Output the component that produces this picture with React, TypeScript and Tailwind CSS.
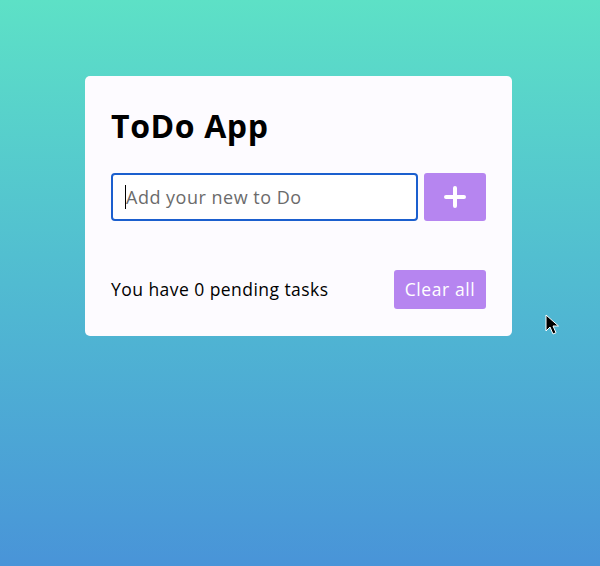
import React from "react";

// Simple todo card on a teal-to-blue gradient
export default function App() {
  return (
    <div
      className="relative h-[566px] w-[600px] overflow-hidden bg-gradient-to-b from-[#5de1c6] to-[#4994d8] pt-[76px] pl-[85px]"
      style={{ fontFamily: "'Open Sans', 'Noto Sans', sans-serif" }}
    >
      <div className="w-[427px] h-[260px] rounded-[5px] bg-[#fdfbff] px-[26px] pt-[26px]">
        <h1 className="text-[32px] leading-[48px] font-bold text-black tracking-[0.6px]">
          ToDo App
        </h1>

        <div className="mt-[23px] flex gap-[6px]">
          <div className="relative flex-1">
            <input
              type="text"
              placeholder="Add your new to Do"
              className="h-[48px] w-full rounded-[4px] border-2 border-[#1b5fce] bg-white pl-[13px] text-[18px] tracking-[0.5px] text-black outline-none placeholder:text-[#6b6b6b]"
            />
            <span className="absolute left-[14px] top-[12px] h-[24px] w-px bg-black" />
          </div>
          <button className="flex h-[48px] w-[62px] items-center justify-center rounded-[3px] bg-[#b685f0]">
            <svg width="22" height="22" viewBox="0 0 22 22">
              <path d="M11 2v18M2 11h18" stroke="white" strokeWidth="4" strokeLinecap="round" />
            </svg>
          </button>
        </div>

        <div className="mt-[49px] flex items-center justify-between">
          <p className="text-[17.5px] tracking-[0.45px] text-black">You have 0 pending tasks</p>
          <button className="h-[39px] w-[92px] rounded-[3px] bg-[#b685f0] text-[17.5px] tracking-[0.6px] text-white">
            Clear all
          </button>
        </div>
      </div>

      {/* mouse pointer */}
      <svg
        className="absolute left-[545px] top-[314px]"
        width="14"
        height="22"
        viewBox="0 0 14 22"
      >
        <path
          d="M1 1v16l4-4 3 7 3-1.3-3-6.7h5.5z"
          fill="black"
          stroke="white"
          strokeWidth="1"
          strokeLinejoin="round"
        />
      </svg>
    </div>
  );
}
